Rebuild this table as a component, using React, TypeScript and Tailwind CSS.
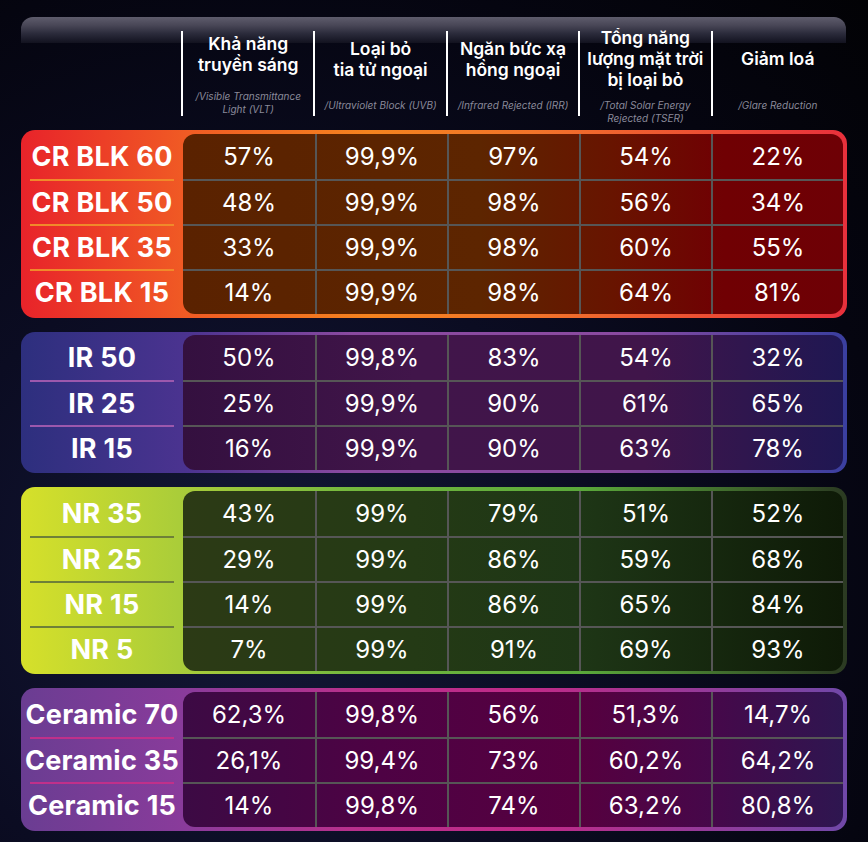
import React from "react";

type Section = {
  labels: string[];
  rows: string[][];
  outer: string;
  panel: string;
  sep: string;
  pad: string;
};

const sections: Section[] = [
  {
    labels: ["CR BLK 60", "CR BLK 50", "CR BLK 35", "CR BLK 15"],
    rows: [
      ["57%", "99,9%", "97%", "54%", "22%"],
      ["48%", "99,9%", "98%", "56%", "34%"],
      ["33%", "99,9%", "98%", "60%", "55%"],
      ["14%", "99,9%", "98%", "64%", "81%"],
    ],
    outer:
      "bg-[linear-gradient(90deg,#e8232a_0%,#f05b24_20%,#f5831f_42%,#f2742a_62%,#e8303c_100%)]",
    panel:
      "bg-[linear-gradient(90deg,#5a2200_0%,#5d2500_45%,#681400_65%,#700003_82%,#6e0005_100%)]",
    sep: "border-[#f08a2a]",
    pad: "py-[4px]",
  },
  {
    labels: ["IR 50", "IR 25", "IR 15"],
    rows: [
      ["50%", "99,8%", "83%", "54%", "32%"],
      ["25%", "99,9%", "90%", "61%", "65%"],
      ["16%", "99,9%", "90%", "63%", "78%"],
    ],
    outer:
      "bg-[linear-gradient(90deg,#2d2f7e_0%,#4b3390_20%,#8a4aa0_40%,#8a4aa0_72%,#3a3fa0_100%)]",
    panel:
      "bg-[linear-gradient(90deg,#34103f_0%,#41154a_35%,#40154a_70%,#1f1752_100%)]",
    sep: "border-[#9c58ad]",
    pad: "py-[3px]",
  },
  {
    labels: ["NR 35", "NR 25", "NR 15", "NR 5"],
    rows: [
      ["43%", "99%", "79%", "51%", "52%"],
      ["29%", "99%", "86%", "59%", "68%"],
      ["14%", "99%", "86%", "65%", "84%"],
      ["7%", "99%", "91%", "69%", "93%"],
    ],
    outer:
      "bg-[linear-gradient(90deg,#d6e02a_0%,#a8cc3a_20%,#74b83e_40%,#5aa83a_68%,#2b3a22_100%)]",
    panel:
      "bg-[linear-gradient(90deg,#2c3a15_0%,#243a15_35%,#1e3616_60%,#0e1a07_100%)]",
    sep: "border-[#6e8038]",
    pad: "pt-[4px] pb-[3px]",
  },
  {
    labels: ["Ceramic 70", "Ceramic 35", "Ceramic 15"],
    rows: [
      ["62,3%", "99,8%", "56%", "51,3%", "14,7%"],
      ["26,1%", "99,4%", "73%", "60,2%", "64,2%"],
      ["14%", "99,8%", "74%", "63,2%", "80,8%"],
    ],
    outer:
      "bg-[linear-gradient(90deg,#6a3d92_0%,#8a3b9b_20%,#b8308c_40%,#c02a88_62%,#7048a8_100%)]",
    panel:
      "bg-[linear-gradient(90deg,#3c0a44_0%,#4e0244_30%,#56003f_60%,#46084a_80%,#2e1650_100%)]",
    sep: "border-[#c0308a]",
    pad: "py-[4px]",
  },
];

const headers: { title: string[]; sub: string[] }[] = [
  { title: ["Khả năng", "truyền sáng"], sub: ["/Visible Transmittance", "Light (VLT)"] },
  { title: ["Loại bỏ", "tia tử ngoại"], sub: ["/Ultraviolet Block (UVB)"] },
  { title: ["Ngăn bức xạ", "hồng ngoại"], sub: ["/Infrared Rejected (IRR)"] },
  { title: ["Tổng năng", "lượng mặt trời", "bị loại bỏ"], sub: ["/Total Solar Energy", "Rejected (TSER)"] },
  { title: ["Giảm loá"], sub: ["/Glare Reduction"] },
];

function SectionBlock({ s }: { s: Section }) {
  return (
    <div className={`flex rounded-[14px] pr-[4px] ${s.pad} ${s.outer}`}>
      <div className="flex w-[162px] shrink-0 flex-col">
        {s.labels.map((l, i) => (
          <div
            key={l}
            className={`mx-[9px] flex h-[45px] items-center justify-center ${
              i > 0 ? `border-t-2 ${s.sep}` : ""
            }`}
          >
            <span className="whitespace-nowrap text-[27px] font-bold leading-none tracking-[0.01em] text-white">
              {l}
            </span>
          </div>
        ))}
      </div>
      <div className={`flex-1 overflow-hidden rounded-[12px] ${s.panel}`}>
        {s.rows.map((r, i) => (
          <div
            key={i}
            className={`grid h-[45px] grid-cols-5 ${i > 0 ? "border-t-2 border-[#565656]" : ""}`}
          >
            {r.map((v, j) => (
              <div
                key={j}
                className={`flex items-center justify-center text-[24px] font-normal leading-none text-white ${
                  j > 0 ? "border-l-2 border-[#565656]" : ""
                }`}
              >
                {v}
              </div>
            ))}
          </div>
        ))}
      </div>
    </div>
  );
}

export default function App() {
  return (
    <div className="relative h-[842px] w-[868px] overflow-hidden bg-[radial-gradient(ellipse_at_30%_70%,#141838_0%,#0b0c22_40%,#050510_75%,#020205_100%)] font-['Inter',sans-serif]">
      <div className="absolute left-[21px] top-[17px] h-[26px] w-[825px] rounded-t-[12px] bg-[linear-gradient(180deg,#5e5c6c_0%,#4a4858_30%,#2a2a3a_65%,#12121f_100%)]" />
      <div className="relative flex flex-col px-[21px] pb-[10px]">
        <div className="grid h-[130px] grid-cols-[160px_repeat(5,1fr)] pr-[4px] pt-[31px]">
          <div />
          {headers.map((h, i) => (
            <div key={i} className="flex h-[85px] flex-col border-l-2 border-white">
              <div className="flex h-[55px] flex-col items-center justify-center text-center text-[17.5px] font-semibold leading-[21px] text-white">
                {h.title.map((t) => (
                  <span key={t} className="whitespace-nowrap">
                    {t}
                  </span>
                ))}
              </div>
              <div className="mt-[13px] flex flex-col items-center text-center text-[10px] italic leading-[13px] text-[#8a8a9a]">
                {h.sub.map((t) => (
                  <span key={t} className="whitespace-nowrap">
                    {t}
                  </span>
                ))}
              </div>
            </div>
          ))}
        </div>
        <div className="flex flex-col gap-[14px]">
          {sections.map((s, i) => (
            <SectionBlock key={i} s={s} />
          ))}
        </div>
      </div>
    </div>
  );
}
